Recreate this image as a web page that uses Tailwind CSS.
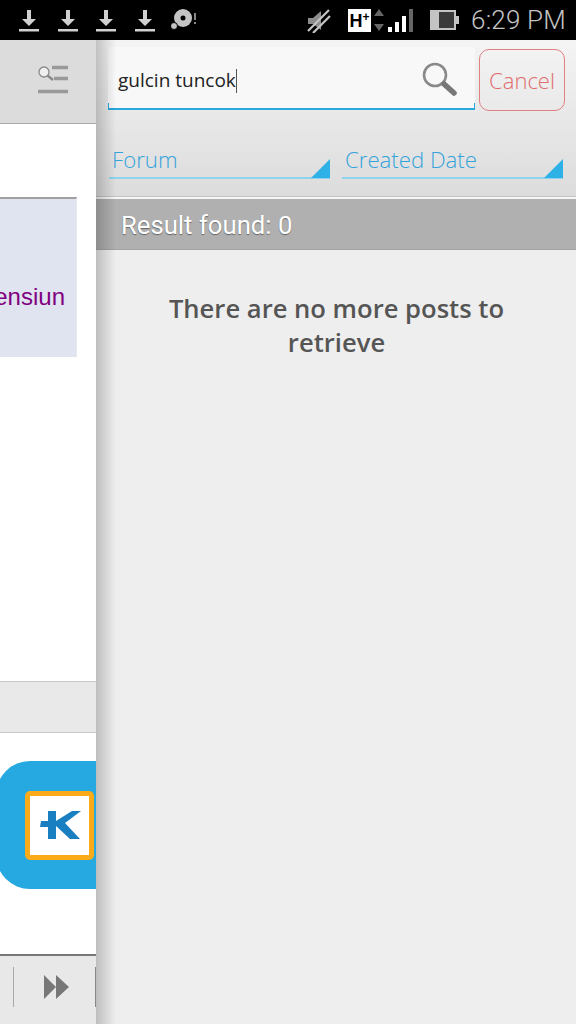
<!DOCTYPE html>
<html lang="en">
<head>
    <meta charset="UTF-8">
    <meta name="viewport" content="width=device-width, initial-scale=1.0">
    <title>Search</title>
    <script src="https://cdn.jsdelivr.net/npm/@tailwindcss/browser@4"></script>
</head>
<body class="bg-white">
<div class="w-[576px] h-[1024px] flex flex-col overflow-hidden font-['Open_Sans',sans-serif]">

    <!-- status bar -->
    <div class="h-10 bg-black flex items-center shrink-0 text-[#c4c4c4]">
        <div class="flex items-center pl-[18px] gap-[16.5px]">
            <svg width="22" height="24" viewBox="0 0 22 24" fill="#d0d0d0"><path d="M9 2h4v9h5l-7 7-7-7h5z"/><rect x="1" y="21" width="20" height="2.5"/></svg>
            <svg width="22" height="24" viewBox="0 0 22 24" fill="#d0d0d0"><path d="M9 2h4v9h5l-7 7-7-7h5z"/><rect x="1" y="21" width="20" height="2.5"/></svg>
            <svg width="22" height="24" viewBox="0 0 22 24" fill="#d0d0d0"><path d="M9 2h4v9h5l-7 7-7-7h5z"/><rect x="1" y="21" width="20" height="2.5"/></svg>
            <svg width="22" height="24" viewBox="0 0 22 24" fill="#d0d0d0"><path d="M9 2h4v9h5l-7 7-7-7h5z"/><rect x="1" y="21" width="20" height="2.5"/></svg>
            <svg class="-ml-[1px]" width="26" height="24" viewBox="0 0 26 24"><circle cx="12" cy="10" r="9" fill="#c4c4c4"/><circle cx="12" cy="10" r="2.5" fill="#000"/><circle cx="3" cy="18" r="3.5" fill="#c4c4c4" stroke="#000"/><rect x="23" y="5" width="2" height="7" fill="#888"/><rect x="23" y="14" width="2" height="2" fill="#888"/></svg>
        </div>
        <div class="ml-auto flex items-center pr-[10px]">
            <svg width="26" height="26" viewBox="0 0 26 26"><path d="M3 11h5l8-7v19l-8-6H3z" fill="#8c8c8c"/><path d="M3 24 24 3M8 26 25 9" stroke="#c4c4c4" stroke-width="2.2" fill="none"/></svg>
            <div class="ml-[17px] w-[23px] h-[23px] bg-white text-black text-[18px] leading-[24px] font-bold text-center font-['Liberation_Sans',sans-serif]">H<span class="text-[12px] align-top leading-[16px]">+</span></div>
            <svg class="ml-[3px]" width="42" height="26" viewBox="0 0 42 26"><path d="M5 2 10 9H0zM5 24 0 17h10z" fill="#666"/><rect x="14" y="20" width="4" height="5" fill="#fff"/><rect x="21" y="15" width="4" height="10" fill="#fff"/><rect x="28" y="9" width="4" height="16" fill="#fff"/><rect x="35" y="2" width="4" height="23" fill="#666"/></svg>
            <svg class="ml-[14px]" width="30" height="22" viewBox="0 0 30 22"><rect x="0" y="1" width="26" height="20" fill="#c4c4c4"/><rect x="9" y="3" width="15" height="16" fill="#3a3a3a"/><rect x="26" y="7" width="3" height="8" fill="#c4c4c4"/></svg>
            <span class="ml-[11px] text-[26px] leading-none font-['Roboto',sans-serif] font-light tracking-[0.2px]">6:29 PM</span>
        </div>
    </div>

    <div class="relative flex flex-1 min-h-0">
        <!-- page behind the panel -->
        <div class="w-24 shrink-0 flex flex-col overflow-hidden bg-white">
            <div class="h-[84px] bg-[#dcdcdc] border-b border-[#a8a8a8] shrink-0 flex items-center justify-end pr-[27px] pb-[3px]">
                <svg width="32" height="30" viewBox="0 0 32 30"><circle cx="7" cy="7" r="5" fill="#efefef" stroke="#8a8a8a" stroke-width="1.3"/><path d="M10.5 10.5 16 15" stroke="#8a8a8a" stroke-width="2.4"/><path d="M15 2.5h16M17 13.5h14M1 26.5h30" stroke="#999" stroke-width="3.4"/></svg>
            </div>
            <div class="h-[73px] shrink-0"></div>
            <div class="w-[77px] h-[160px] shrink-0 bg-[#e0e4f0] border-t-2 border-[#a0a0a0] border-r border-r-[#e8e8ee] flex items-center justify-end pr-[11px] pt-[38px] overflow-hidden">
                <span class="text-[24px] leading-none text-[#800080] font-['Liberation_Sans',sans-serif]">ensiun</span>
            </div>
            <div class="h-[325px] shrink-0 border-b border-[#c8c8c8]"></div>
            <div class="h-[51px] shrink-0 bg-[#e9e9e9] border-b border-[#c8c8c8]"></div>
            <div class="h-[221px] shrink-0 flex items-start pt-[28px]">
                <div class="w-[110px] h-[128px] shrink-0 -ml-[4px] bg-[#25a9e0] rounded-l-[34px] flex items-center pl-[29px]">
                    <div class="w-[69px] h-[69px] shrink-0 bg-white border-[5px] border-[#fbab18] rounded-[5px] flex items-center justify-center">
                        <svg width="42" height="30" viewBox="0 0 42 30"><path d="M9 1h8v10L33 1h9L26 13l15 16H31L17 16v13H9V17H1l1-6h7z" fill="#1a7fc1"/></svg>
                    </div>
                </div>
            </div>
            <div class="flex-1 bg-[#e8e8e8] border-t-2 border-[#777] flex items-center relative">
                <div class="w-[1px] h-[40px] bg-[#aaa] ml-[13px] mb-[6px] shrink-0"></div>
                <svg class="ml-[30px] mb-[6px] shrink-0" width="25" height="24" viewBox="0 0 25 24" fill="#777"><path d="M0 0 12 12 0 24zM12 0 25 12 12 24z"/></svg>
                <div class="w-[1px] h-[40px] bg-[#888] ml-[26px] mb-[6px] shrink-0"></div>
            </div>
        </div>

        <!-- search panel -->
        <div class="flex-1 flex flex-col bg-[#eeeeee]">
            <div class="h-[156px] shrink-0 bg-linear-to-b from-[#f4f4f4] to-[#dcdcdc] px-3 pt-[9px] flex flex-col">
                <div class="flex">
                    <div class="w-[367px] h-[63px] mt-[-2px] bg-[#f8f8f8] border-b-2 border-[#2aa8dc] flex items-center relative pl-[10px] pt-[6px]">
                        <span class="text-[19px] leading-none text-[#222] pb-[1px]">gulcin tuncok</span>
                        <span class="w-[1px] h-[24px] bg-[#555]"></span>
                        <svg class="absolute right-[18px] top-[14px]" width="36" height="36" viewBox="0 0 36 36" fill="none"><circle cx="14" cy="14" r="11" stroke="#8a8a8a" stroke-width="2.6"/><path d="M23 23 33 32" stroke="#777" stroke-width="5.5" stroke-linecap="round"/></svg>
                        <div class="absolute left-0 bottom-0 w-[1px] h-[5px] bg-[#2aa8dc]"></div>
                        <div class="absolute right-0 bottom-0 w-[1px] h-[5px] bg-[#2aa8dc]"></div>
                    </div>
                    <div class="w-[86px] h-[62px] ml-1 border border-[#e08080] rounded-[10px] flex items-center justify-center text-[22px] font-light text-[#e06c6c]">Cancel</div>
                </div>
                <div class="flex gap-3 mt-[35px] ml-[1px]">
                    <div class="w-[221px] h-[33px] border-b-2 border-[#8fd3ee] relative text-[22.2px] leading-[28px] font-light text-[#35a3db] pl-[3px]">
                        Forum
                        <div class="absolute right-0 bottom-[-1px] w-0 h-0 border-l-[19px] border-l-transparent border-b-[19px] border-b-[#2eb1e6]"></div>
                    </div>
                    <div class="w-[221px] h-[33px] border-b-2 border-[#8fd3ee] relative text-[22.2px] leading-[28px] font-light text-[#35a3db] pl-[3px]">
                        Created Date
                        <div class="absolute right-0 bottom-[-1px] w-0 h-0 border-l-[19px] border-l-transparent border-b-[19px] border-b-[#2eb1e6]"></div>
                    </div>
                </div>
            </div>
            <div class="h-[3px] shrink-0 bg-[#f6f6f6] border-t border-[#c4c4c4]"></div>
            <div class="h-[51px] shrink-0 bg-[#b0b0b0] border-b border-[#a4a4a4] flex items-center pl-[25px] pt-[3px] text-[25.7px] text-white font-['Roboto',sans-serif] [text-shadow:0_1px_1px_#666]">Result found: 0</div>
            <p class="w-[400px] mx-auto mt-[42px] text-center text-[25.6px] leading-[34px] font-semibold text-[#555]">There are no more posts to retrieve</p>
        </div>

        <!-- panel shadow over the page edge -->
        <div class="absolute left-24 top-0 bottom-0 w-5 bg-linear-to-r from-black/20 to-transparent"></div>
    </div>
</div>
</body>
</html>
